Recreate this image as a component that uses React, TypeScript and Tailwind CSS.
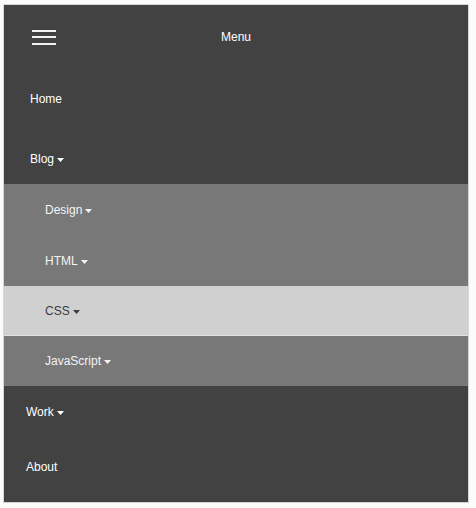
import React from 'react';

const Caret = ({ color = '#ffffff' }: { color?: string }) => (
  <svg width="7" height="4" viewBox="0 0 7 4" className="ml-[3px] mt-[2px]">
    <polygon points="0,0 7,0 3.5,4" fill={color} />
  </svg>
);

type Item = { label: string; caret?: boolean };

const subItems: Item[] = [
  { label: 'Design', caret: true },
  { label: 'HTML', caret: true },
];

export default function App() {
  return (
    <div
      className="w-[476px] h-[508px] bg-[#fbfbfb] pt-[4px] pl-[3px]"
      style={{ fontFamily: '"Liberation Sans", Arial, sans-serif' }}
    >
      <div className="w-[466px] h-[499px] border border-[#d6d6d6] bg-[#424242] text-[12px] leading-[14px] text-white">
        {/* Header */}
        <div className="relative h-[64px] flex items-center pl-[28px]">
          <div className="flex flex-col gap-[4.5px]">
            <span className="block w-[24px] h-[2px] bg-[#f2f2f2]" />
            <span className="block w-[24px] h-[2px] bg-[#f2f2f2]" />
            <span className="block w-[24px] h-[2px] bg-[#f2f2f2]" />
          </div>
          <span className="absolute left-0 right-0 text-center top-[25px]">Menu</span>
        </div>

        {/* Top level */}
        <div className="h-[60px] flex items-center pl-[26px]">Home</div>
        <div className="h-[55px] flex items-center pl-[26px] pt-[5px]">
          Blog
          <Caret />
        </div>

        {/* Blog submenu */}
        <div className="bg-[#787878]">
          {subItems.map((item) => (
            <div key={item.label} className="h-[51px] flex items-center pl-[41px] text-[#f4f4f4]">
              {item.label}
              {item.caret && <Caret color="#f4f4f4" />}
            </div>
          ))}
          <div className="h-[50px] flex items-center pl-[41px] bg-[#d0d0d0] text-[#3c3c3c] border-b border-[#e2e2e2]">
            CSS
            <Caret color="#3c3c3c" />
          </div>
          <div className="h-[50px] flex items-center pl-[41px] text-[#f4f4f4]">
            JavaScript
            <Caret color="#f4f4f4" />
          </div>
        </div>

        <div className="h-[51px] flex items-center pl-[22px]">
          Work
          <Caret />
        </div>
        <div className="h-[60px] flex items-center pl-[22px]">About</div>
      </div>
    </div>
  );
}
